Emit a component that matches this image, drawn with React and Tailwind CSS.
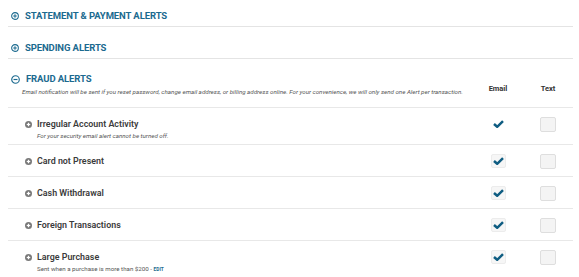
import React from 'react';

const blue = 'text-[#1b6a8f]';

function CircleIcon({ minus = false, size = 9 }) {
  return (
    <svg width={size} height={size} viewBox="0 0 10 10" className="shrink-0">
      <circle cx="5" cy="5" r="4.2" fill="none" stroke="currentColor" strokeWidth="1.3" />
      <line x1="2.8" y1="5" x2="7.2" y2="5" stroke="currentColor" strokeWidth="1.3" />
      {!minus && <line x1="5" y1="2.8" x2="5" y2="7.2" stroke="currentColor" strokeWidth="1.3" />}
    </svg>
  );
}

function RowPlus() {
  return (
    <svg width="7" height="7" viewBox="0 0 8 8" className="shrink-0">
      <circle cx="4" cy="4" r="4" fill="#7a7a7a" />
      <line x1="2" y1="4" x2="6" y2="4" stroke="#fff" strokeWidth="1.4" />
      <line x1="4" y1="2" x2="4" y2="6" stroke="#fff" strokeWidth="1.4" />
    </svg>
  );
}

function Check({ boxed }) {
  return (
    <div className={`w-[15px] h-[14px] flex items-center justify-center rounded-[2px] ${boxed ? 'bg-[#f6f6f6] border border-[#ececec]' : ''}`}>
      <svg width="11" height="8" viewBox="0 0 11 8">
        <path d="M1 4 L4.2 6.8 L10 1.2" fill="none" stroke="#0f5d82" strokeWidth="2.5" strokeLinejoin="miter" />
      </svg>
    </div>
  );
}

function Box() {
  return <div className="w-[16px] h-[15px] rounded-[2px] bg-[#f4f4f4] border border-[#dedede]" />;
}

function Section({ title, className }) {
  return (
    <div className={`flex items-center gap-[6px] pl-[3px] border-b border-[#e4e4e4] ${className}`}>
      <span className={blue}><CircleIcon size={8} /></span>
      <span className={`${blue} text-[9.5px] leading-[12px] font-bold tracking-[-0.1px]`}>{title}</span>
    </div>
  );
}

const rows = [
  { title: 'Irregular Account Activity', sub: 'For your security email alert cannot be turned off.', italic: true, boxed: false },
  { title: 'Card not Present', boxed: true },
  { title: 'Cash Withdrawal', boxed: true },
  { title: 'Foreign Transactions', boxed: true },
  { title: 'Large Purchase', sub: 'Sent when a purchase is more than $200 - ', edit: true, boxed: true },
];

export default function App() {
  return (
    <div className="w-[579px] h-[277px] overflow-hidden bg-white pl-[8px] pr-[6px] font-['Roboto','Liberation_Sans',sans-serif]">
      <Section title="STATEMENT & PAYMENT ALERTS" className="pt-[10px] pb-[4px]" />
      <Section title="SPENDING ALERTS" className="pt-[15px] pb-[4px]" />

      <div className="flex pt-[14px] pb-[11px]">
        <div className="flex-1">
          <div className="flex items-center gap-[6px] pl-[3px]">
            <span className={blue}><CircleIcon minus size={9} /></span>
            <span className={`${blue} text-[9.5px] leading-[12px] font-bold tracking-[-0.1px]`}>FRAUD ALERTS</span>
          </div>
          <p className="pl-[14px] mt-[3px] text-[6.2px] leading-[8px] italic text-[#555]">
            Email notification will be sent if you reset password, change email address, or billing address online. For your convenience, we will only send one Alert per transaction.
          </p>
        </div>
        <div className="w-[50px] text-center text-[7.5px] leading-[10px] font-bold text-[#333] mt-[11px]">Email</div>
        <div className="w-[50px] text-center text-[7.5px] leading-[10px] font-bold text-[#333] mt-[11px]">Text</div>
      </div>

      {rows.map((r) => (
        <div key={r.title} className={`flex border-t border-[#e8e8e8] pt-[10px] ${r.sub ? 'pb-[4px]' : 'pb-[9px]'}`}>
          <div className="flex-1 pl-[17px]">
            <div className="flex items-center gap-[5px] h-[12px]">
              <RowPlus />
              <span className="text-[8.9px] leading-[12px] font-semibold text-[#3b3b3b]">{r.title}</span>
            </div>
            {r.sub && (
              <p className={`pl-[12px] mt-[2px] text-[6.2px] leading-[8px] text-[#555] ${r.italic ? 'italic' : ''}`}>
                {r.sub}
                {r.edit && <span className="text-[#1b6a8f] font-bold text-[4.8px]">EDIT</span>}
              </p>
            )}
          </div>
          <div className="w-[50px] h-[12px] flex items-center justify-center">
            <Check boxed={r.boxed} />
          </div>
          <div className="w-[50px] h-[12px] flex items-center justify-center">
            <Box />
          </div>
        </div>
      ))}
    </div>
  );
}
